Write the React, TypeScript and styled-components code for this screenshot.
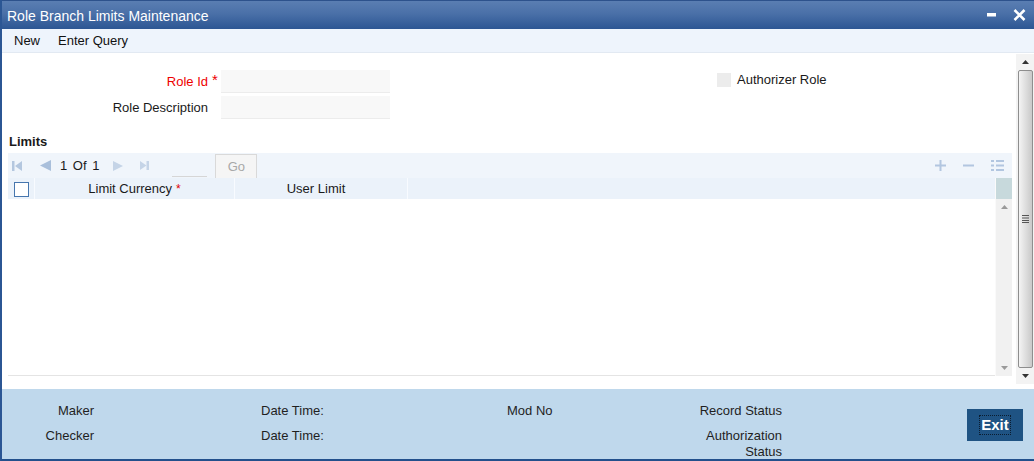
import React from "react";
import styled, { createGlobalStyle } from "styled-components";

const GlobalStyle = createGlobalStyle`
  html, body {
    margin: 0;
    padding: 0;
    background: #ffffff;
  }
  body {
    font-family: "Liberation Sans", Arial, sans-serif;
    font-size: 13px;
    color: #1a1a1a;
  }
`;

const Window = styled.div`
  width: 1034px;
  height: 461px;
  box-sizing: border-box;
  display: flex;
  flex-direction: column;
  border-left: 2px solid #2b5694;
  border-bottom: 2px solid #23508c;
  overflow: hidden;
  background: #ffffff;
`;

const TitleBar = styled.div`
  height: 29px;
  flex: none;
  display: flex;
  align-items: center;
  padding: 0 8px 0 5px;
  box-sizing: border-box;
  border-top: 1px solid #2d528c;
  background: linear-gradient(to bottom, #5a7eb2 0%, #4a70a8 45%, #2c5693 100%);
  color: #ffffff;
  font-size: 14px;
`;

const Title = styled.span`
  flex: 1;
  padding-top: 1px;
`;

const WinButtons = styled.div`
  display: flex;
  align-items: center;
  gap: 17px;
`;

const Toolbar = styled.div`
  height: 24px;
  flex: none;
  display: flex;
  align-items: center;
  gap: 18px;
  padding-left: 12px;
  background: #eef4fc;
  border-bottom: 1px solid #e2e9f2;
  box-sizing: border-box;
`;

const ToolItem = styled.span`
  color: #111;
`;

const Content = styled.div`
  flex: 1;
  display: flex;
  min-height: 0;
`;

const Main = styled.div`
  flex: 1;
  display: flex;
  flex-direction: column;
  padding-top: 17px;
`;

const Form = styled.div`
  display: grid;
  grid-template-columns: 206px 13px 169px 327px auto;
  grid-auto-rows: 23px;
  row-gap: 3px;
  align-items: center;
`;

const Label = styled.label<{ $required?: boolean }>`
  text-align: right;
  color: ${p => (p.$required ? "#ee0000" : "#1a1a1a")};
`;

const Star = styled.span`
  color: #ee0000;
  font-size: 15px;
  padding-left: 4px;
  align-self: start;
  line-height: 20px;
`;

const Field = styled.div`
  height: 23px;
  background: #f8f8f8;
  border-bottom: 1px solid #ececec;
  box-sizing: border-box;
`;

const CheckField = styled.div`
  display: flex;
  align-items: center;
  gap: 6px;
  align-self: start;
  margin-top: 2px;
`;

const GrayBox = styled.span`
  width: 14px;
  height: 14px;
  background: #ececec;
  display: inline-block;
`;

const SectionTitle = styled.div`
  font-weight: bold;
  margin: 15px 0 4px 7px;
  line-height: 15px;
`;

const Grid = styled.div`
  margin: 0 4px 0 6px;
  display: flex;
  flex-direction: column;
`;

const Pager = styled.div`
  height: 25px;
  display: flex;
  align-items: center;
  background: #f0f5fb;
  padding-left: 4px;
  padding-right: 8px;
`;

const PageText = styled.span`
  margin: 0 14px 0 0;
  word-spacing: 2px;
`;

const PageInput = styled.span`
  width: 35px;
  height: 24px;
  margin-left: 23px;
  border-bottom: 1px solid #d6d6d6;
  box-sizing: border-box;
  align-self: flex-start;
`;

const GoButton = styled.span`
  margin-left: 8px;
  width: 42px;
  height: 25px;
  align-self: flex-start;
  margin-top: 1px;
  box-sizing: border-box;
  border: 1px solid #d9d9d9;
  background: #f5f5f5;
  color: #a8a8a8;
  display: flex;
  align-items: center;
  justify-content: center;
`;

const PagerRight = styled.div`
  margin-left: auto;
  display: flex;
  align-items: center;
  gap: 17px;
`;

const GridBody = styled.div`
  display: flex;
  height: 198px;
`;

const Table = styled.div`
  flex: 1;
  display: flex;
  flex-direction: column;
  border-bottom: 1px solid #e4e4e4;
`;

const HeaderRow = styled.div`
  height: 21px;
  display: flex;
  align-items: center;
  background: #ebf2fa;
`;

const HeadCell = styled.div<{ $w: number; $shift?: number }>`
  width: ${p => p.$w}px;
  height: 100%;
  display: flex;
  align-items: center;
  justify-content: center;
  padding-right: ${p => p.$shift ?? 0}px;
  border-right: 1px solid #f8fbff;
  box-sizing: border-box;
`;

const CheckBox = styled.span`
  width: 15px;
  height: 15px;
  box-sizing: border-box;
  border: 1px solid #4676ae;
  background: #fff;
  margin-top: 2px;
`;

const HeadStar = styled.span`
  color: #e00000;
  margin-left: 4px;
  font-size: 12px;
`;

const VScroll = styled.div<{ $w: number }>`
  width: ${p => p.$w}px;
  display: flex;
  flex-direction: column;
  align-items: center;
  background: #f1f1f1;
  border-left: 1px solid #fafafa;
  box-sizing: border-box;
`;

const ScrollCap = styled.div`
  height: 21px;
  width: 100%;
  background: #c7d9dc;
`;

const Arrow = styled.div`
  height: 16px;
  width: 100%;
  display: flex;
  align-items: center;
  justify-content: center;
`;

const Spacer = styled.div`
  flex: 1;
`;

const PageScroll = styled.div`
  width: 18px;
  margin: 1px 0 5px;
  display: flex;
  flex-direction: column;
  align-items: center;
  background: #f3f3f3;
`;

const Thumb = styled.div`
  flex: 1;
  width: 15px;
  margin-left: 1px;
  box-sizing: border-box;
  border: 1px solid #8e8e8e;
  border-radius: 2px;
  background: linear-gradient(to right, #f4f4f4, #dadada 60%, #c9c9c9);
  display: flex;
  align-items: center;
  justify-content: center;
`;

const Footer = styled.div`
  height: 70px;
  flex: none;
  background: #bfd8ec;
  display: flex;
  align-items: flex-start;
  padding: 14px 0 0 2px;
  box-sizing: border-box;
`;

const FootCol = styled.div<{ $w: number; $right?: boolean; $gap?: number }>`
  width: ${p => p.$w}px;
  margin-left: ${p => p.$gap ?? 0}px;
  display: flex;
  flex-direction: column;
  gap: 9px;
  align-items: ${p => (p.$right ? "flex-end" : "flex-start")};
  text-align: ${p => (p.$right ? "right" : "left")};
  line-height: 16px;
  color: #1f1f1f;
`;

const Wrap = styled.span`
  max-width: 90px;
`;

const ExitButton = styled.button`
  margin: 6px 0 0 185px;
  width: 56px;
  height: 32px;
  background: #1f5383;
  border: none;
  color: #fff;
  font-family: "Liberation Sans", Arial, sans-serif;
  font-weight: bold;
  font-size: 15px;
  display: flex;
  align-items: center;
  justify-content: center;
  padding: 0;
`;

const FocusRing = styled.span`
  border: 1px dotted #0b1d30;
  padding: 0 1px;
  line-height: 18px;
`;

const pale = "#b4c7df";

const FirstIcon = () => (
  <svg width="11" height="10" viewBox="0 0 11 10">
    <rect x="0" y="0" width="2.5" height="10" fill={pale} />
    <polygon points="10,0 3,5 10,10" fill={pale} />
  </svg>
);

const PrevIcon = () => (
  <svg width="11" height="11" viewBox="0 0 11 11" style={{ marginLeft: 17, marginRight: 9 }}>
    <polygon points="11,0 0,5.5 11,11" fill="#a9bfdb" />
  </svg>
);

const NextIcon = () => (
  <svg width="10" height="10" viewBox="0 0 10 10" style={{ marginRight: 17 }}>
    <polygon points="0,0 10,5 0,10" fill="#c5d4e7" />
  </svg>
);

const LastIcon = () => (
  <svg width="9" height="9" viewBox="0 0 9 9">
    <polygon points="0,0 6.5,4.5 0,9" fill="#c5d4e7" />
    <rect x="6.5" y="0" width="2.5" height="9" fill="#c5d4e7" />
  </svg>
);

const PlusIcon = () => (
  <svg width="11" height="11" viewBox="0 0 11 11">
    <rect x="4.5" y="0" width="2" height="11" fill="#b2c6e0" />
    <rect x="0" y="4.5" width="11" height="2" fill="#b2c6e0" />
  </svg>
);

const MinusIcon = () => (
  <svg width="11" height="11" viewBox="0 0 11 11">
    <rect x="0" y="4.5" width="11" height="2" fill="#b2c6e0" />
  </svg>
);

const ListIcon = () => (
  <svg width="13" height="12" viewBox="0 0 13 12">
    {[0, 4.5, 9].map(y => (
      <g key={y}>
        <rect x="0" y={y} width="3" height="2" fill="#b2c6e0" />
        <rect x="5" y={y} width="8" height="2" fill="#b2c6e0" />
      </g>
    ))}
  </svg>
);

const UpArrow = ({ color = "#7a7a7a" }: { color?: string }) => (
  <svg width="7" height="4" viewBox="0 0 7 4">
    <polygon points="0,4 3.5,0 7,4" fill={color} />
  </svg>
);

const DownArrow = ({ color = "#7a7a7a" }: { color?: string }) => (
  <svg width="7" height="4" viewBox="0 0 7 4">
    <polygon points="0,0 7,0 3.5,4" fill={color} />
  </svg>
);

const Grip = () => (
  <svg width="7" height="8" viewBox="0 0 7 8">
    {[0, 2.5, 5, 7].map(y => (
      <rect key={y} x="0" y={y} width="7" height="1" fill="#555" />
    ))}
  </svg>
);

const App: React.FC = () => {
  return (
    <>
      <GlobalStyle />
      <Window>
        <TitleBar>
          <Title>Role Branch Limits Maintenance</Title>
          <WinButtons>
            <svg width="9" height="4" viewBox="0 0 9 4">
              <rect width="9" height="3.5" fill="#ffffff" />
            </svg>
            <svg width="13" height="12" viewBox="0 0 13 12">
              <path d="M1.5 1 L11.5 11 M11.5 1 L1.5 11" stroke="#ffffff" strokeWidth="2.6" />
            </svg>
          </WinButtons>
        </TitleBar>

        <Toolbar>
          <ToolItem>New</ToolItem>
          <ToolItem>Enter Query</ToolItem>
        </Toolbar>

        <Content>
          <Main>
            <Form>
              <Label $required>Role Id</Label>
              <Star>*</Star>
              <Field />
              <span />
              <CheckField>
                <GrayBox />
                <span>Authorizer Role</span>
              </CheckField>
              <Label>Role Description</Label>
              <span />
              <Field />
            </Form>

            <SectionTitle>Limits</SectionTitle>

            <Grid>
              <Pager>
                <FirstIcon />
                <PrevIcon />
                <PageText>1 Of 1</PageText>
                <NextIcon />
                <LastIcon />
                <PageInput />
                <GoButton>Go</GoButton>
                <PagerRight>
                  <PlusIcon />
                  <MinusIcon />
                  <ListIcon />
                </PagerRight>
              </Pager>
              <GridBody>
                <Table>
                  <HeaderRow>
                    <HeadCell $w={27}>
                      <CheckBox />
                    </HeadCell>
                    <HeadCell $w={200}>
                      Limit Currency<HeadStar>*</HeadStar>
                    </HeadCell>
                    <HeadCell $w={173} $shift={10}>
                      User Limit
                    </HeadCell>
                  </HeaderRow>
                </Table>
                <VScroll $w={17}>
                  <ScrollCap />
                  <Arrow>
                    <UpArrow color="#9a9a9a" />
                  </Arrow>
                  <Spacer />
                  <Arrow>
                    <DownArrow color="#9a9a9a" />
                  </Arrow>
                </VScroll>
              </GridBody>
            </Grid>
          </Main>

          <PageScroll>
            <Arrow>
              <UpArrow color="#333" />
            </Arrow>
            <Thumb>
              <Grip />
            </Thumb>
            <Arrow>
              <DownArrow color="#333" />
            </Arrow>
          </PageScroll>
        </Content>

        <Footer>
          <FootCol $w={90} $right>
            <span>Maker</span>
            <span>Checker</span>
          </FootCol>
          <FootCol $w={246} $gap={167}>
            <span>Date Time:</span>
            <span>Date Time:</span>
          </FootCol>
          <FootCol $w={140}>
            <span>Mod No</span>
          </FootCol>
          <FootCol $w={135} $right>
            <span>Record Status</span>
            <Wrap>Authorization Status</Wrap>
          </FootCol>
          <ExitButton>
            <FocusRing>Exit</FocusRing>
          </ExitButton>
        </Footer>
      </Window>
    </>
  );
};

export default App;
